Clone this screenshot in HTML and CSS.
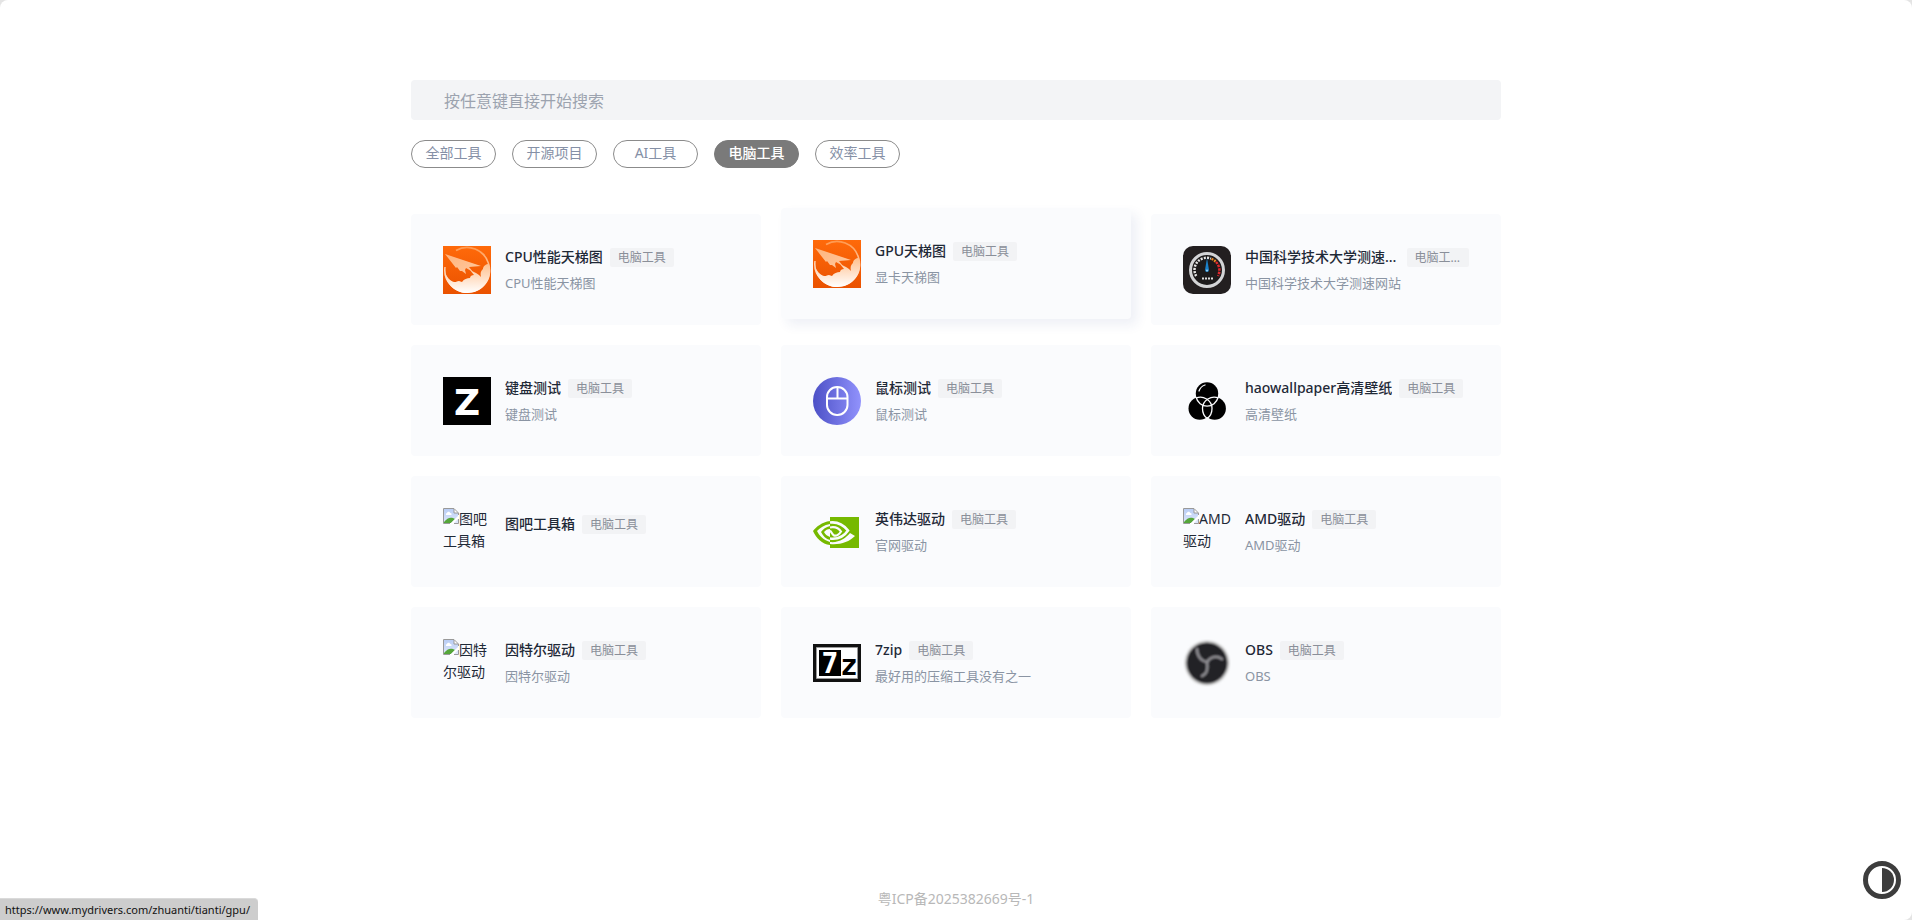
FILE: index.html
```html
<!DOCTYPE html>
<html lang="zh-CN">
<head>
<meta charset="utf-8">
<meta name="viewport" content="width=device-width, initial-scale=1">
<title>电脑工具</title>
<link rel="stylesheet" href="styles.css">
</head>
<body>
<svg class="defs" aria-hidden="true">
  <defs>
    <linearGradient id="orange" x1="0" y1="0" x2="0" y2="1"><stop offset="0" stop-color="#ff6a0a"/><stop offset="1" stop-color="#ea5200"/></linearGradient>
    <linearGradient id="ring" x1="0" y1="0" x2="0" y2="1"><stop offset="0" stop-color="#ff9a50"/><stop offset="1" stop-color="#fff"/></linearGradient>
    <linearGradient id="smoke" x1="0" y1="0" x2="0" y2="1"><stop offset="0" stop-color="#ffc08e"/><stop offset="1" stop-color="#fff"/></linearGradient>
    <linearGradient id="plane" x1="0" y1="0" x2="1" y2="1"><stop offset="0" stop-color="#ffb47c"/><stop offset="1" stop-color="#ffc9a0"/></linearGradient>
    <linearGradient id="violet"><stop offset="0" stop-color="#4c50c6"/><stop offset="1" stop-color="#9192fc"/></linearGradient>
    <linearGradient id="sky" x1="0" y1="0" x2="0" y2="1"><stop offset="0" stop-color="#b9cdf5"/><stop offset="1" stop-color="#dfe8fb"/></linearGradient>
    <filter id="soft" x="-10%" y="-10%" width="120%" height="120%"><feGaussianBlur stdDeviation=".8"/></filter>
  </defs>
  <symbol id="rocket" viewBox="0 0 48 48">
    <path fill="url(#orange)" d="M0 0h48v48H0z"/>
    <path fill="none" stroke="url(#ring)" stroke-width="1.600" d="M13 4.500A22.300 22.300 0 1 1 2 21"/>
    <path fill="url(#smoke)" d="M2 27c2 4 5 8 9 9 2 .5 3-1 5-1l3 1c2-3 5-4 8-4 0-2 2-3 4-3l-4-5 6 3 3 2 2 2c-1-4 0-6 2-8 0-3 3-5 6-5 5 15-6 29-22 29C13 47 3 39 2 27z"/>
    <path fill="url(#plane)" d="m2 8 36 12-12 1 4 5-7-4-1 2 1 4-4-3-2 0-3-4-1 1z"/>
  </symbol>
  <symbol id="broken" viewBox="0 0 16 16">
    <path fill="#fff" d="M0 0h11l5 5v11H0z"/>
    <path fill="url(#sky)" d="M1 1h10v4h4v10H1z"/>
    <path fill="#fff" d="M3 6c0-1 1-1 1-1 1-2 3-1 3 0 2 0 2 2 1 2H3z"/>
    <path fill="#55a63a" d="M1 15v-1c3-4 6-5 9-4l2 1-4 4z"/>
    <path fill="#fff" d="m16 7-9 9h3l6-6z"/>
    <path fill="none" stroke="#999" d="M15.500 7V5l-4.500-4.500H.5v15H7M11 1v4h4M11 15.500h4.500V11"/>
  </symbol>
</svg>

<div class="page">
  <main class="container">
    <input class="search" type="search" placeholder="按任意键直接开始搜索" aria-label="搜索">
    <nav class="chips" aria-label="分类">
      <button class="chip" type="button">全部工具</button>
      <button class="chip" type="button">开源项目</button>
      <button class="chip" type="button">AI工具</button>
      <button class="chip active" type="button" aria-pressed="true">电脑工具</button>
      <button class="chip" type="button">效率工具</button>
    </nav>

    <section class="grid">
      <a class="card" href="#">
        <svg class="logo" aria-hidden="true"><use href="#rocket"/></svg>
        <div class="info"><div class="head"><span class="title">CPU性能天梯图</span><span class="tag">电脑工具</span></div><p class="desc">CPU性能天梯图</p></div>
      </a>
      <a class="card raised" href="#">
        <svg class="logo" aria-hidden="true"><use href="#rocket"/></svg>
        <div class="info"><div class="head"><span class="title">GPU天梯图</span><span class="tag">电脑工具</span></div><p class="desc">显卡天梯图</p></div>
      </a>
      <a class="card" href="#">
        <svg class="logo" viewBox="0 0 48 48" aria-hidden="true">
          <rect width="48" height="48" rx="10" fill="#231f20"/>
          <circle cx="24" cy="24" r="16.500" fill="#1c1a1b" stroke="#d3d4d6" stroke-width="3"/>
          <path d="M13.200 30A12 12 0 0 1 28 12.700" fill="none" stroke="#e8e8e8" stroke-width="2.500" stroke-dasharray="2 1.200"/>
          <path d="M28.500 12.900a12 12 0 0 1 4 2.600" fill="none" stroke="#f08a24" stroke-width="2.500" stroke-dasharray="2 1"/>
          <path d="M33 16a12 12 0 0 1 2 14" fill="none" stroke="#e0282e" stroke-width="2.500" stroke-dasharray="2.500 1"/>
          <path d="m24 12 2 12a2 2 0 1 1-4 0z" fill="#1a80c8"/><circle cx="24" cy="24.500" r="1" fill="#9fd4f5"/>
          <path d="M19 32.500h11" stroke="#ddd" stroke-width="2" stroke-dasharray="2 1"/>
        </svg>
        <div class="info"><div class="head"><span class="title">中国科学技术大学测速网站</span><span class="tag">电脑工具</span></div><p class="desc">中国科学技术大学测速网站</p></div>
      </a>

      <a class="card" href="#">
        <svg class="logo" viewBox="0 0 48 48" aria-hidden="true"><path d="M0 0h48v48H0z"/><text class="z-mark" x="24" y="38" text-anchor="middle">Z</text></svg>
        <div class="info"><div class="head"><span class="title">键盘测试</span><span class="tag">电脑工具</span></div><p class="desc">键盘测试</p></div>
      </a>
      <a class="card" href="#">
        <svg class="logo" viewBox="0 0 48 48" aria-hidden="true">
          <circle cx="24" cy="24" r="24" fill="url(#violet)"/>
          <g fill="none" stroke="#fff" stroke-width="2"><rect x="14" y="10" width="20.500" height="28" rx="10"/><path d="M14 21.500h20.500M24.500 10v11.500"/></g>
        </svg>
        <div class="info"><div class="head"><span class="title">鼠标测试</span><span class="tag">电脑工具</span></div><p class="desc">鼠标测试</p></div>
      </a>
      <a class="card" href="#">
        <svg class="logo" viewBox="0 0 48 48" aria-hidden="true">
          <circle cx="24" cy="16.500" r="11.200"/><circle cx="16.700" cy="31.500" r="11.200"/><circle cx="31.700" cy="31.500" r="11.200"/>
          <g fill="none" stroke="#fafbfd" stroke-width="1.300">
            <path d="M13.200 20.500a11.200 11.200 0 0 0 21.800 0"/>
            <path d="M13 21c7-3 16 2 16 10.500 0 4-2 8-4.800 10"/>
            <path d="M35.500 21c-7-3-16 2-16 10.500 0 4 2 8 4.700 10"/>
            <path d="M16 14c1-3 3-5 6-6" stroke-linecap="round"/>
          </g>
        </svg>
        <div class="info"><div class="head"><span class="title">haowallpaper高清壁纸</span><span class="tag">电脑工具</span></div><p class="desc">高清壁纸</p></div>
      </a>

      <a class="card" href="#">
        <span class="logo missing"><svg class="broken" aria-hidden="true"><use href="#broken"/></svg>图吧工具箱</span>
        <div class="info"><div class="head"><span class="title">图吧工具箱</span><span class="tag">电脑工具</span></div><p class="desc"></p></div>
      </a>
      <a class="card" href="#">
        <svg class="logo" viewBox="0 0 48 48" aria-hidden="true">
          <path fill="#76b900" d="M17 9h29v31H17z"/>
          <path fill="#76b900" d="M17 13C9 14 3 19 0 23c3 7 9 13 17 14v-3C10 32 6 27 4 23c3-3 7-6 13-7z"/>
          <path fill="#76b900" d="M17 18c-4 1-7 3-9 6 2 4 5 7 9 8v-3c-3-1-5-3-6-5 2-2 3-3 6-3z"/>
          <g fill="none" stroke="#fafbfd">
            <path stroke-width="2.600" d="M17 14.500c8-1 14 3 18 8-4 6-10 9-18 8"/>
            <path stroke-width="2.200" d="M17 19.500c5-1 9 1 11 4-2 3-4 5-7 4-2-1-2-3-4-5"/>
          </g>
          <path fill="#fafbfd" d="m37 25 5 3c-6 6-15 9-25 8v-2c9 1 16-4 20-9z"/>
        </svg>
        <div class="info"><div class="head"><span class="title">英伟达驱动</span><span class="tag">电脑工具</span></div><p class="desc">官网驱动</p></div>
      </a>
      <a class="card" href="#">
        <span class="logo missing"><svg class="broken" aria-hidden="true"><use href="#broken"/></svg>AMD驱动</span>
        <div class="info"><div class="head"><span class="title">AMD驱动</span><span class="tag">电脑工具</span></div><p class="desc">AMD驱动</p></div>
      </a>

      <a class="card" href="#">
        <span class="logo missing"><svg class="broken" aria-hidden="true"><use href="#broken"/></svg>因特尔驱动</span>
        <div class="info"><div class="head"><span class="title">因特尔驱动</span><span class="tag">电脑工具</span></div><p class="desc">因特尔驱动</p></div>
      </a>
      <a class="card" href="#">
        <svg class="logo" viewBox="0 0 48 48" aria-hidden="true">
          <path fill="#111" d="M0 5h48v38H0z"/><path fill="#fff" stroke="#999" d="M3.500 8.500h41v31h-41z"/>
          <path d="M6 11h22v26H6z"/>
          <text class="seven-mark" x="17" y="34" text-anchor="middle">7</text><text class="seven-z" x="36" y="36" text-anchor="middle">z</text>
        </svg>
        <div class="info"><div class="head"><span class="title">7zip</span><span class="tag">电脑工具</span></div><p class="desc">最好用的压缩工具没有之一</p></div>
      </a>
      <a class="card" href="#">
        <svg class="logo" viewBox="0 0 48 48" aria-hidden="true">
          <g filter="url(#soft)">
            <circle cx="24" cy="24" r="22.500" fill="#ccc"/><circle cx="24" cy="24" r="20.500" fill="#232127"/>
            <g fill="none" stroke="#8f8e93" stroke-width="2.500" stroke-linecap="round"><path d="M24 23c-6-1-10-6-10-13"/><path d="M24 23c3-5 9-7 15-3"/><path d="M24 23c1 6 0 12-5 14"/></g>
          </g>
        </svg>
        <div class="info"><div class="head"><span class="title">OBS</span><span class="tag">电脑工具</span></div><p class="desc">OBS</p></div>
      </a>
    </section>
  </main>

  <footer class="footer"><a href="#">粤ICP备2025382669号-1</a></footer>
</div>

<button class="theme" type="button" aria-label="切换主题">
  <svg viewBox="0 0 38 38" aria-hidden="true"><circle cx="19" cy="19" r="16.500" fill="#fff" stroke="#3d3d3d" stroke-width="5"/><path fill="#3d3d3d" d="M19 7a12 12 0 0 1 0 24z"/></svg>
</button>
<div class="status">https://www.mydrivers.com/zhuanti/tianti/gpu/</div>
</body>
</html>
```
FILE: styles.css
```css
* { box-sizing: border-box; }

html { background: #e4e4e4; }

body {
  margin: 0;
  font-family: "Noto Sans", "Noto Sans CJK SC", sans-serif;
  font-size: 14px;
  line-height: 22px;
  color: #1f2937;
}

a { color: inherit; text-decoration: none; }

button, input { font: inherit; }

.defs { position: absolute; width: 0; height: 0; }

.page {
  display: flex;
  flex-direction: column;
  min-height: 100vh;
  padding: 80px 24px 10px;
  background: #fff;
  border-radius: 8px;
}

.container {
  width: 100%;
  max-width: 1090px;
  margin: 0 auto;
}

.search {
  display: block;
  width: 100%;
  height: 40px;
  padding: 2px 33px 0;
  border: 0;
  border-radius: 4px;
  outline: 0;
  background: #f3f4f6;
  font-size: 16px;
  color: #1f2937;
  appearance: none;
}

.search::placeholder { color: #9ca3af; opacity: 1; }

.chips {
  display: flex;
  flex-wrap: wrap;
  gap: 16px;
  margin: 20px 0 46px;
}

.chip {
  width: 85px;
  height: 28px;
  padding: 0 0 2px;
  border: 1px solid #8b8b8b;
  border-radius: 14px;
  background: #fff;
  color: #8590a6;
  line-height: 22px;
  cursor: pointer;
}

.chip.active {
  border-color: #7a7a7a;
  background: #7a7a7a;
  color: #fff;
  font-weight: 500;
}

.grid {
  display: grid;
  grid-template-columns: repeat(auto-fill, minmax(320px, 1fr));
  gap: 20px;
}

.card {
  display: flex;
  gap: 14px;
  padding: 32px 32px 31px;
  border-radius: 4px;
  background: #fafbfd;
}

.card.raised {
  transform: translateY(-6px);
  box-shadow: 6px 6px 12px rgba(40, 60, 140, .08);
}

.logo {
  flex: none;
  width: 48px;
  height: 48px;
}

.missing { display: block; overflow: hidden; }

.broken {
  width: 16px;
  height: 16px;
  vertical-align: 0;
}

.info {
  display: flex;
  flex: 1;
  flex-direction: column;
  justify-content: center;
  min-width: 0;
}

.head {
  display: flex;
  align-items: center;
  gap: 7px;
}

.title {
  overflow: hidden;
  color: #1f2937;
  font-weight: 500;
  text-overflow: ellipsis;
  white-space: nowrap;
}

.tag {
  flex-shrink: .4;
  overflow: hidden;
  padding: 0 8px;
  border-radius: 2px;
  background: #f2f3f5;
  color: #8a8f99;
  font-size: 12px;
  line-height: 19px;
  text-overflow: ellipsis;
  white-space: nowrap;
}

.desc {
  min-height: 12px;
  margin: 4px 0 0;
  color: #8a94a3;
  font-size: 13px;
}

.z-mark { fill: #fff; font: 700 36px "DejaVu Sans", sans-serif; }
.seven-mark { fill: #fff; font: 700 28px "DejaVu Sans Mono", monospace; }
.seven-z { fill: #000; font: 700 29px "DejaVu Sans Mono", monospace; }

.footer {
  margin-top: auto;
  color: #b8b8b8;
  text-align: center;
}

.theme {
  position: fixed;
  right: 11px;
  bottom: 21px;
  width: 38px;
  height: 38px;
  padding: 0;
  border: 0;
  background: none;
  cursor: pointer;
}

.theme svg { display: block; }

.status {
  position: fixed;
  bottom: 0;
  left: 0;
  padding: 0 8px 0 5px;
  border-top: 1px solid #dadada;
  border-radius: 0 4px 0 0;
  background: #cdcdcd;
  color: #111;
  font-size: 11px;
  line-height: 21px;
}
```
